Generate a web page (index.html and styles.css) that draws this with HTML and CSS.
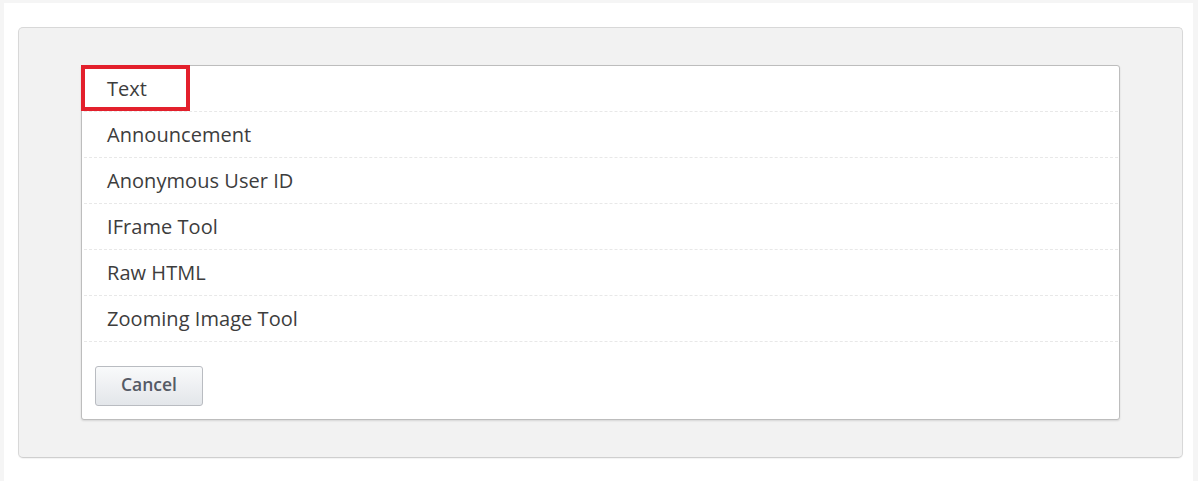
FILE: index.html
```html
<!DOCTYPE html>
<html>
<head>
<meta charset="utf-8">
<link rel="stylesheet" href="styles.css">
</head>
<body>
<div class="page">
  <div class="panel">
    <div class="menu">
      <ul class="list">
        <li class="item highlighted">Text</li>
        <li class="item">Announcement</li>
        <li class="item">Anonymous User ID</li>
        <li class="item">IFrame Tool</li>
        <li class="item">Raw HTML</li>
        <li class="item">Zooming Image Tool</li>
      </ul>
      <div class="actions">
        <button class="btn">Cancel</button>
      </div>
    </div>
  </div>
</div>
</body>
</html>
```
FILE: styles.css
```css
html, body {
  margin: 0;
  padding: 0;
  height: 100%;
}
body {
  background: #f5f5f5;
  font-family: "Open Sans", "Noto Sans", sans-serif;
  overflow: hidden;
}
.page {
  background: #ffffff;
  margin: 3px 5px 0 4px;
  padding: 24px 10px 0 14px;
  height: 100%;
  box-sizing: border-box;
}
.panel {
  width: 1165px;
  box-sizing: border-box;
  background: #f2f2f2;
  border: 1px solid #d8d8d8;
  border-bottom-color: #cfcfcf;
  border-radius: 5px;
  box-shadow: 0 1px 1px rgba(0,0,0,0.05);
  padding: 37px 62px 37px 62px;
}
.menu {
  background: #ffffff;
  border: 1px solid #bdbdbd;
  border-radius: 3px;
  box-shadow: 0 1px 2px rgba(0,0,0,0.12);
  padding: 0 1px 13px 0;
}
.list {
  list-style: none;
  margin: 0;
  padding: 0;
}
.item {
  position: relative;
  height: 45px;
  line-height: 45px;
  border-bottom: 1px dashed #e8e8e8;
  padding-left: 23px;
  font-size: 20px;
  letter-spacing: 0.05px;
  color: #3d3d3d;
  margin-left: 2px;
}
.highlighted::after {
  content: "";
  position: absolute;
  left: -3px;
  top: -1px;
  width: 109px;
  height: 46px;
  box-sizing: border-box;
  border: 4px solid #e3202c;
}
.actions {
  padding: 24px 0 0 13px;
}
.btn {
  width: 108px;
  height: 40px;
  border: 1px solid #b9bcc1;
  border-radius: 3px;
  background: linear-gradient(#f9fafb, #e3e6ea);
  font-family: "Open Sans", "Noto Sans", sans-serif;
  font-size: 17.5px;
  font-weight: 600;
  color: #555a65;
  padding: 0 0 4px 0;
}
```
